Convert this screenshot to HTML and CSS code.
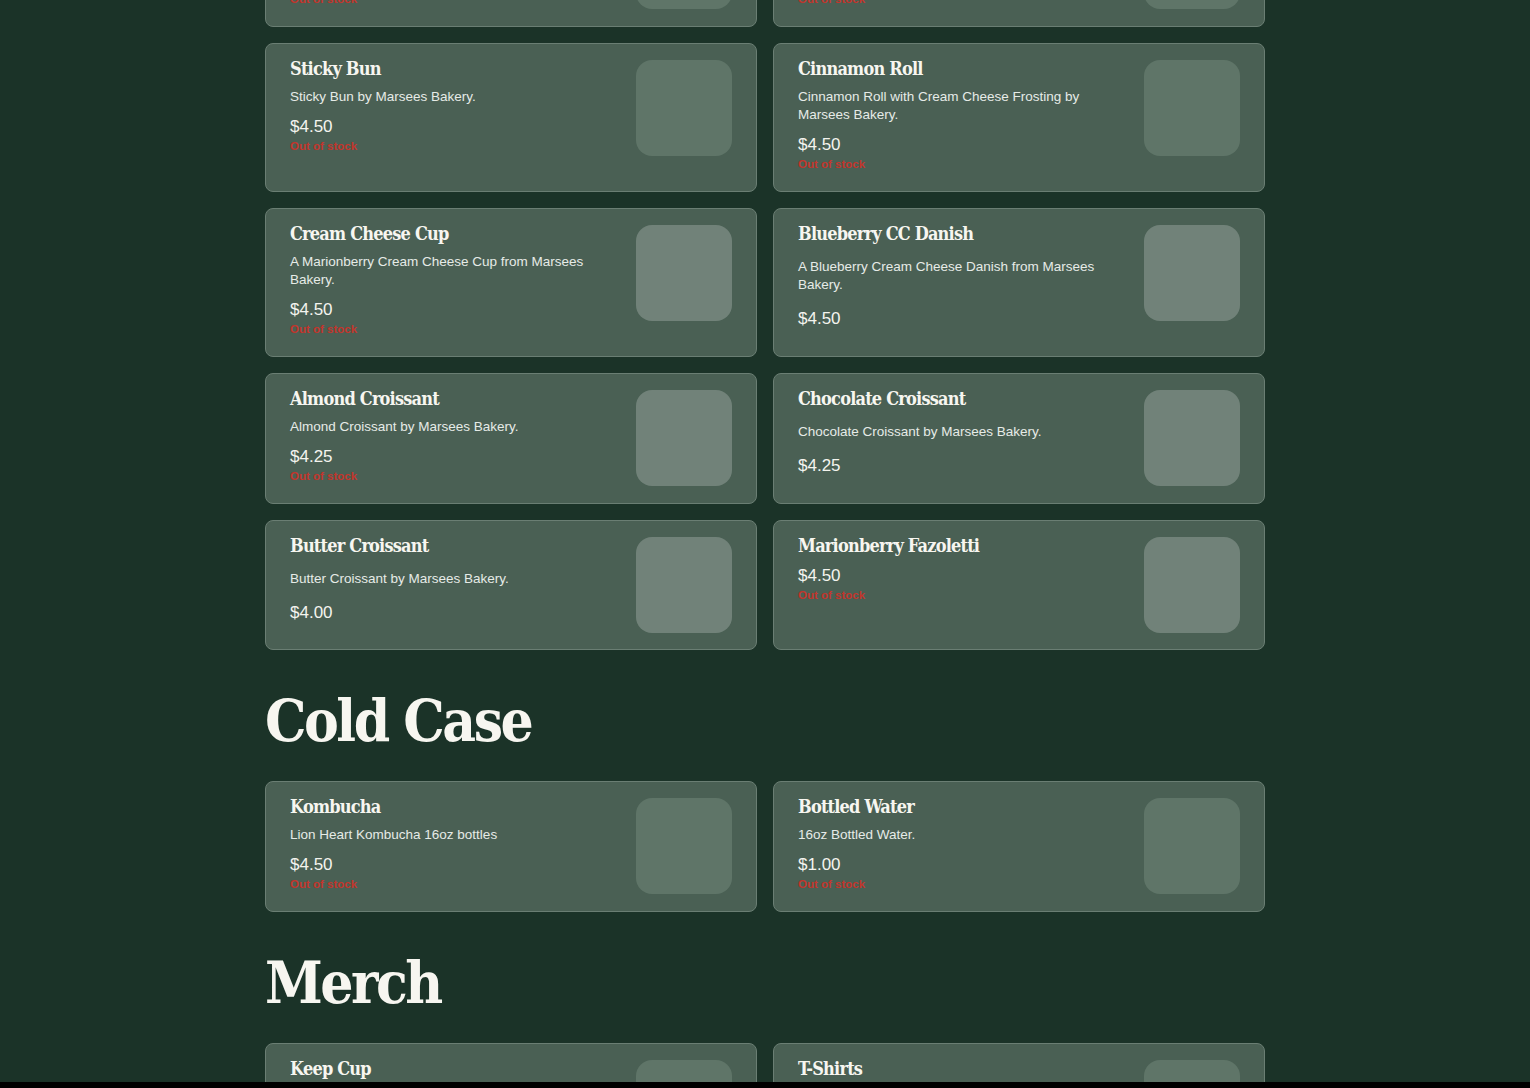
FILE: index.html
```html
<!DOCTYPE html>
<html lang="en">
<head>
<meta charset="utf-8">
<title>Menu</title>
<link rel="stylesheet" href="styles.css">
</head>
<body>
<main class="menu">
  <section class="section">
    <div class="grid">
      <article class="card">
        <div class="info">
          <h3 class="title">Morning Bun</h3>
          <p class="desc">Morning Bun by Marsees Bakery.</p>
          <div class="price">$4.50</div>
          <div class="stock">Out of stock</div>
        </div>
        <div class="thumb"></div>
      </article>
      <article class="card">
        <div class="info">
          <h3 class="title">Scone</h3>
          <p class="desc">Seasonal Scone by Marsees Bakery.</p>
          <div class="price">$4.25</div>
          <div class="stock">Out of stock</div>
        </div>
        <div class="thumb"></div>
      </article>
      <article class="card">
        <div class="info">
          <h3 class="title">Sticky Bun</h3>
          <p class="desc">Sticky Bun by Marsees Bakery.</p>
          <div class="price">$4.50</div>
          <div class="stock">Out of stock</div>
        </div>
        <div class="thumb"></div>
      </article>
      <article class="card">
        <div class="info">
          <h3 class="title">Cinnamon Roll</h3>
          <p class="desc">Cinnamon Roll with Cream Cheese Frosting by Marsees Bakery.</p>
          <div class="price">$4.50</div>
          <div class="stock">Out of stock</div>
        </div>
        <div class="thumb"></div>
      </article>
      <article class="card">
        <div class="info">
          <h3 class="title">Cream Cheese Cup</h3>
          <p class="desc">A Marionberry Cream Cheese Cup from Marsees Bakery.</p>
          <div class="price">$4.50</div>
          <div class="stock">Out of stock</div>
        </div>
        <div class="thumb light"></div>
      </article>
      <article class="card">
        <div class="info in-stock">
          <h3 class="title">Blueberry CC Danish</h3>
          <p class="desc">A Blueberry Cream Cheese Danish from Marsees Bakery.</p>
          <div class="price">$4.50</div>
        </div>
        <div class="thumb light"></div>
      </article>
      <article class="card">
        <div class="info">
          <h3 class="title">Almond Croissant</h3>
          <p class="desc">Almond Croissant by Marsees Bakery.</p>
          <div class="price">$4.25</div>
          <div class="stock">Out of stock</div>
        </div>
        <div class="thumb light"></div>
      </article>
      <article class="card">
        <div class="info in-stock">
          <h3 class="title">Chocolate Croissant</h3>
          <p class="desc">Chocolate Croissant by Marsees Bakery.</p>
          <div class="price">$4.25</div>
        </div>
        <div class="thumb light"></div>
      </article>
      <article class="card">
        <div class="info in-stock">
          <h3 class="title">Butter Croissant</h3>
          <p class="desc">Butter Croissant by Marsees Bakery.</p>
          <div class="price">$4.00</div>
        </div>
        <div class="thumb light"></div>
      </article>
      <article class="card">
        <div class="info">
          <h3 class="title">Marionberry Fazoletti</h3>
          <div class="price">$4.50</div>
          <div class="stock">Out of stock</div>
        </div>
        <div class="thumb light"></div>
      </article>
    </div>
  </section>

  <section class="section">
    <h2 class="heading">Cold Case</h2>
    <div class="grid">
      <article class="card">
        <div class="info">
          <h3 class="title">Kombucha</h3>
          <p class="desc">Lion Heart Kombucha 16oz bottles</p>
          <div class="price">$4.50</div>
          <div class="stock">Out of stock</div>
        </div>
        <div class="thumb"></div>
      </article>
      <article class="card">
        <div class="info">
          <h3 class="title">Bottled Water</h3>
          <p class="desc">16oz Bottled Water.</p>
          <div class="price">$1.00</div>
          <div class="stock">Out of stock</div>
        </div>
        <div class="thumb"></div>
      </article>
    </div>
  </section>

  <section class="section">
    <h2 class="heading">Merch</h2>
    <div class="grid">
      <article class="card">
        <div class="info">
          <h3 class="title">Keep Cup</h3>
          <p class="desc">Reusable Keep Cup.</p>
          <div class="price">$20.00</div>
        </div>
        <div class="thumb"></div>
      </article>
      <article class="card">
        <div class="info">
          <h3 class="title">T-Shirts</h3>
          <p class="desc">Cafe T-Shirts.</p>
          <div class="price">$25.00</div>
        </div>
        <div class="thumb"></div>
      </article>
    </div>
  </section>
</main>
<div class="bottom-bar"></div>
</body>
</html>
```

FILE: styles.css
```css
html, body {
  margin: 0;
  padding: 0;
  background: #1b3328;
}

body {
  font-family: "Liberation Sans", Arial, sans-serif;
  color: #f4f4ee;
  overflow: hidden;
}

.menu {
  width: 1000px;
  margin: -104px auto 0;
}

.section {
  display: block;
}

.heading {
  font-family: "DejaVu Serif Condensed", "DejaVu Serif", serif;
  font-stretch: condensed;
  font-weight: 700;
  font-size: 58px;
  line-height: 72px;
  letter-spacing: -2.5px;
  color: #f7f6f0;
  margin: 35px 0 24px;
}

.grid {
  display: grid;
  grid-template-columns: 1fr 1fr;
  gap: 16px;
}

.card {
  display: flex;
  align-items: flex-start;
  gap: 24px;
  padding: 16px 24px;
  background: #4a6054;
  border: 1px solid #6a7e73;
  border-radius: 8px;
}

.info {
  flex: 1;
  min-width: 0;
  display: flex;
  flex-direction: column;
}

.title {
  margin: 0;
  font-family: "DejaVu Serif Condensed", "DejaVu Serif", serif;
  font-stretch: condensed;
  font-weight: 700;
  font-size: 18px;
  line-height: 18px;
  letter-spacing: -0.8px;
  color: #f7f6f0;
}

.desc {
  margin: 10px 0 0;
  font-size: 13.5px;
  line-height: 18px;
  color: #e6ebe7;
}

.price {
  margin-top: 11px;
  font-size: 17px;
  line-height: 20px;
  color: #f4f4ee;
}

.stock {
  margin: 2px 0 4px;
  font-size: 11.5px;
  font-weight: 700;
  line-height: 14px;
  color: #c2352c;
}

.in-stock .desc {
  margin-top: 15px;
}

.in-stock .price {
  margin-top: 15px;
}

.thumb {
  flex: 0 0 96px;
  width: 96px;
  height: 96px;
  border-radius: 16px;
  background: #5f7568;
}

.thumb.light {
  background: #718279;
}

.bottom-bar {
  position: fixed;
  left: 0;
  right: 0;
  bottom: 0;
  height: 6px;
  background: #000;
}
```
